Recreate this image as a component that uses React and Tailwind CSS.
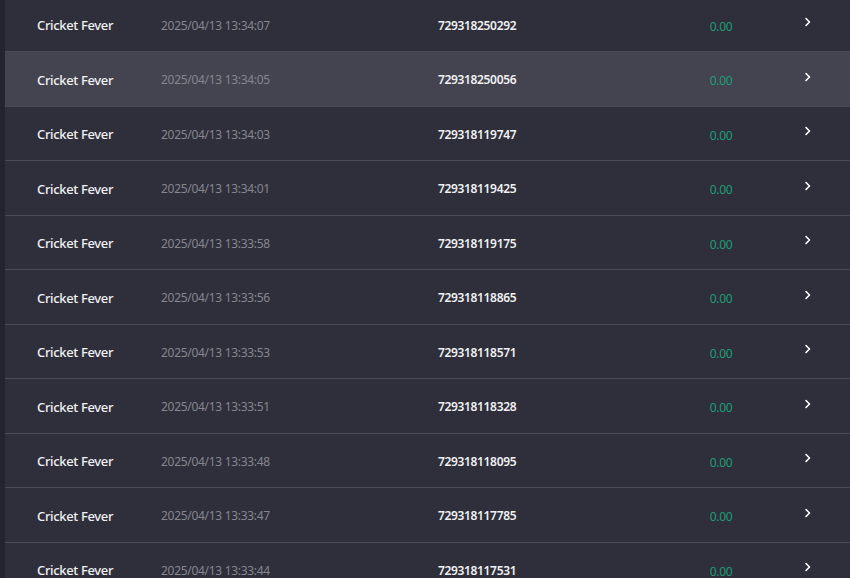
import React from 'react'

const rows = [
  ['2025/04/13 13:34:07', '729318250292'],
  ['2025/04/13 13:34:05', '729318250056'],
  ['2025/04/13 13:34:03', '729318119747'],
  ['2025/04/13 13:34:01', '729318119425'],
  ['2025/04/13 13:33:58', '729318119175'],
  ['2025/04/13 13:33:56', '729318118865'],
  ['2025/04/13 13:33:53', '729318118571'],
  ['2025/04/13 13:33:51', '729318118328'],
  ['2025/04/13 13:33:48', '729318118095'],
  ['2025/04/13 13:33:47', '729318117785'],
  ['2025/04/13 13:33:44', '729318117531'],
]

function Chevron() {
  return (
    <svg width="8" height="10" viewBox="0 0 8 10" fill="none">
      <path d="M2 1.5 L5.5 5 L2 8.5" stroke="#fff" strokeWidth="1.6" strokeLinecap="round" strokeLinejoin="round" />
    </svg>
  )
}

export default function App() {
  return (
    <div className="h-[578px] w-[850px] overflow-hidden bg-[#2e2f3b] flex" style={{ fontFamily: '"Noto Sans", sans-serif' }}>
      <div className="w-[5px] shrink-0 bg-[#23252e]" />
      <div className="flex-1 -mt-[2.5px]">
        {rows.map(([date, id], i) => (
          <div
            key={id}
            className={`h-[54.5px] flex items-center border-b border-[#4a4b56] ${i === 1 ? 'bg-[#43444f]' : ''}`}
          >
            <div className="w-[156px] pl-[32px] pt-[3px] text-[13px] font-medium text-[#f1f1f3] tracking-[-0.35px]">Cricket Fever</div>
            <div className="w-[277px] pt-[3px] text-[12px] text-[#85868f] tracking-[-0.3px]">{date}</div>
            <div className="w-[253px] pt-[3px] text-[12px] font-semibold text-[#f1f1f3] tracking-[-0.35px]">{id}</div>
            <div className="w-[60px] pt-[5px] text-[12px] text-[#1f9d77] tracking-[-0.3px] text-center">0.00</div>
            <div className="flex-1 pl-[53px] pb-[4px]">
              <Chevron />
            </div>
          </div>
        ))}
      </div>
    </div>
  )
}
